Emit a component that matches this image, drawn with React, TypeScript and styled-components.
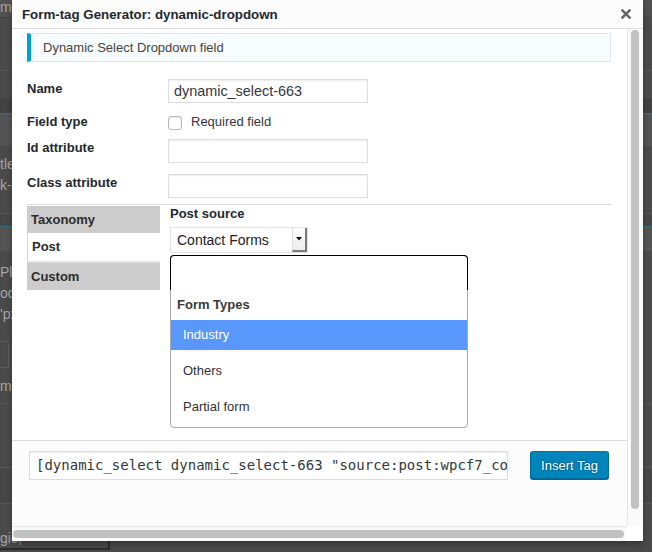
import styled, { createGlobalStyle } from 'styled-components'

const GlobalStyle = createGlobalStyle`
  html, body {
    margin: 0;
    padding: 0;
  }
  body {
    background: #4a4a4a;
    font-family: "Liberation Sans", Arial, sans-serif;
  }
  * {
    box-sizing: border-box;
  }
`;

const Screen = styled.div`
    position: relative;
    width: 652px;
    height: 552px;
    overflow: hidden;
    background: #4a4a4a;
`;

/* page behind the overlay */
const Backdrop = styled.div`
    display: flex;
    flex-direction: column;
    width: 652px;
    font-family: "Liberation Sans", Arial, sans-serif;
    font-size: 14px;
    color: #a6a6a6;
    white-space: nowrap;
`;

const BackBand = styled.div<{ $h: number; $bg?: string; $line?: string; $pt?: number; $lh?: number }>`
    height: ${({ $h }) => $h}px;
    background: ${({ $bg }) => $bg ?? 'transparent'};
    border-bottom: 1px solid ${({ $line }) => $line ?? 'transparent'};
    padding-top: ${({ $pt }) => $pt ?? 0}px;
    line-height: ${({ $lh }) => $lh ?? 21}px;
`;

const BackButton = styled.div`
    width: 9px;
    height: 27px;
    margin-top: 10px;
    border: 1px solid #5e5e5e;
    border-left: none;
    border-radius: 0 3px 3px 0;
`;

const BackInput = styled.div`
    width: 110px;
    height: 24px;
    margin-top: 2px;
    border-right: 2px solid #2c2c2c;
    border-bottom: 2px solid #2c2c2c;
    line-height: 24px;
    padding-left: 0;
`;

/* modal */
const Modal = styled.div`
    position: absolute;
    left: 12px;
    top: 0;
    width: 631px;
    height: 541px;
    background: #fff;
    display: flex;
    flex-direction: column;
    box-shadow: 0 3px 6px rgba(0, 0, 0, 0.3);
`;

const TitleBar = styled.div`
    flex: none;
    height: 29px;
    display: flex;
    align-items: center;
    justify-content: space-between;
    padding: 0 11px 0 10px;
    background: #fcfcfc;
    border-bottom: 1px solid #dddddd;
`;

const Title = styled.h1`
    margin: 0;
    font-size: 13.3px;
    font-weight: bold;
    color: #23282d;
`;

const CloseButton = styled.button`
    width: 12px;
    height: 12px;
    padding: 0;
    border: none;
    background: none;
    display: flex;
    color: #666;
`;

const Body = styled.div`
    flex: 1;
    min-height: 0;
    display: flex;
`;

const Viewport = styled.div`
    flex: 1;
    min-width: 0;
    display: flex;
    flex-direction: column;
`;

const Content = styled.div`
    flex: 1;
    padding: 4px 16px 0 15px;
`;

const Notice = styled.div`
    height: 29px;
    display: flex;
    align-items: center;
    padding: 0 12px;
    background: #f7fcfe;
    border: 1px solid #e3e7ea;
    border-left: 4px solid #00a0d2;
    font-size: 13px;
    color: #444;
`;

const FieldRow = styled.div<{ $mt: number }>`
    display: flex;
    align-items: flex-start;
    margin-top: ${({ $mt }) => $mt}px;
`;

const FieldLabel = styled.label<{ $pt?: number }>`
    flex: none;
    width: 141px;
    padding-top: ${({ $pt }) => $pt ?? 0}px;
    font-size: 13px;
    font-weight: bold;
    line-height: 16px;
    color: #23282d;
`;

const TextInput = styled.input`
    width: 200px;
    height: 24px;
    margin: 0;
    padding: 0 5px;
    border: 1px solid #dddddd;
    box-shadow: inset 0 1px 2px rgba(0, 0, 0, 0.07);
    background: #fff;
    font-family: "Liberation Sans", Arial, sans-serif;
    font-size: 14.4px;
    color: #32373c;
    outline: none;
`;

const CheckLine = styled.div`
    display: flex;
    align-items: flex-start;
    gap: 9px;
    font-size: 13px;
    line-height: 16px;
    color: #32373c;
`;

const CheckBox = styled.span`
    width: 14px;
    height: 14px;
    margin-top: 2px;
    border: 1px solid #b4b9be;
    border-radius: 3px;
    background: #fff;
    box-shadow: inset 0 1px 2px rgba(0, 0, 0, 0.1);
`;

const Divider = styled.hr`
    margin: 6px 0 0;
    border: none;
    border-top: 1px solid #dddddd;
`;

const SourceSection = styled.div`
    display: flex;
    gap: 10px;
`;

const TabList = styled.div`
    flex: none;
    width: 133px;
    padding-top: 1px;
    display: flex;
    flex-direction: column;
`;

const Tab = styled.div<{ $active?: boolean }>`
    height: ${({ $active }) => ($active ? 30 : 27)}px;
    padding-left: 4px;
    line-height: 27px;
    font-size: 13px;
    font-weight: bold;
    color: #2c2c2c;
    background: ${({ $active }) => ($active ? '#fff' : '#cccccc')};
    border-left: ${({ $active }) => ($active ? '1px solid #d4d4d4' : 'none')};
    border-bottom: ${({ $active }) => ($active ? '2px solid #e2e2e2' : 'none')};
`;

const SourcePanel = styled.div`
    padding-top: 1px;
    display: flex;
    flex-direction: column;
`;

const PanelLabel = styled.div`
    font-size: 13px;
    font-weight: bold;
    line-height: 16px;
    color: #23282d;
`;

const SelectBox = styled.div`
    margin-top: 5px;
    width: 138px;
    height: 26px;
    display: flex;
    border: 1px solid #e4e4e4;
    background: #fff;
`;

const SelectValue = styled.div`
    flex: 1;
    padding-left: 6px;
    font-size: 14px;
    line-height: 24px;
    color: #222;
`;

const SelectArrow = styled.div`
    width: 15px;
    display: flex;
    align-items: center;
    justify-content: center;
    background: linear-gradient(#ffffff, #ececec);
    border-left: 1px solid #e0e0e0;
    border-right: 2px solid #7a7a7a;
    border-bottom: 2px solid #7a7a7a;
`;

const Dropdown = styled.div`
    margin-top: 2px;
    width: 298px;
    border: 1px solid #aaaaaa;
    border-radius: 4px;
    background: #fff;
    padding-bottom: 5px;
`;

const SearchField = styled.div`
    height: 35px;
    margin: -1px -1px 0;
    border: 1px solid #000;
    border-bottom: none;
    border-radius: 4px 4px 0 0;
`;

const GroupLabel = styled.div`
    height: 30px;
    padding-left: 6px;
    line-height: 30px;
    font-size: 13px;
    font-weight: bold;
    color: #3a3a3a;
`;

const OptionList = styled.div`
    display: flex;
    flex-direction: column;
    gap: 6px;
`;

const Option = styled.div<{ $highlighted?: boolean }>`
    height: 30px;
    padding-left: 12px;
    line-height: 30px;
    font-size: 13px;
    color: ${({ $highlighted }) => ($highlighted ? '#fff' : '#333')};
    background: ${({ $highlighted }) => ($highlighted ? '#5897fb' : 'transparent')};
`;

const Footer = styled.div`
    flex: none;
    height: 86px;
    display: flex;
    align-items: flex-start;
    gap: 22px;
    padding: 10px 18px 0 17px;
    border-top: 1px solid #dddddd;
    background: #fcfcfc;
`;

const TagField = styled.div`
    flex: none;
    width: 479px;
    height: 29px;
    padding: 0 6px;
    overflow: hidden;
    white-space: nowrap;
    border: 1px solid #dddddd;
    box-shadow: inset 0 1px 2px rgba(0, 0, 0, 0.07);
    background: #fff;
    font-family: "DejaVu Sans Mono", "Liberation Mono", monospace;
    font-size: 14px;
    line-height: 26px;
    color: #32373c;
`;

const InsertButton = styled.button`
    width: 79px;
    height: 28px;
    margin: 0;
    padding: 0;
    border: 1px solid #0073aa;
    border-color: #0073aa #006799 #006799;
    border-radius: 3px;
    box-shadow: 0 1px 0 #006799;
    background: #0085ba;
    color: #fff;
    font-family: "Liberation Sans", Arial, sans-serif;
    font-size: 13px;
    text-shadow: 0 -1px 1px #006799, 1px 0 1px #006799, 0 1px 1px #006799, -1px 0 1px #006799;
`;

const VTrack = styled.div`
    flex: none;
    width: 16px;
    padding: 1px 4px 0 3px;
    border-left: 1px solid #e6e6e6;
    background: #fafafa;
`;

const VThumb = styled.div`
    width: 8px;
    height: 479px;
    border-radius: 4px;
    background: #c1c1c1;
`;

const HScrollRow = styled.div`
    flex: none;
    height: 15px;
    display: flex;
`;

const HTrack = styled.div`
    flex: 1;
    padding: 3px 3px 0 1px;
    border-top: 1px solid #e6e6e6;
    background: #fafafa;
`;

const HThumb = styled.div`
    height: 8px;
    border-radius: 4px;
    background: #c1c1c1;
`;

const ScrollCorner = styled.div`
    width: 16px;
    background: #fff;
`;

const CloseIcon = () => (
    <svg width="12" height="12" viewBox="0 0 12 12">
        <path d="M1.6 1.6 L10.4 10.4 M10.4 1.6 L1.6 10.4" stroke="currentColor" strokeWidth="2.6" />
    </svg>
);

const ArrowIcon = () => (
    <svg width="6" height="4" viewBox="0 0 6 4">
        <path d="M0 0 H6 L3 3.5 Z" fill="#111" />
    </svg>
);

const TABS = [
    { title: 'Taxonomy', active: false },
    { title: 'Post', active: true },
    { title: 'Custom', active: false },
];

const OPTIONS = ['Industry', 'Others', 'Partial form'];

const TAG_CODE = '[dynamic_select dynamic_select-663 "source:post:wpcf7_contact_form" "taxonomy:wpcf7_form_type"]';

export default function App() {
    return (
        <Screen>
            <GlobalStyle />
            <Backdrop>
                <BackBand $h={18} $bg="#515151" $line="#434343" $lh={15}>me</BackBand>
                <BackBand $h={53} $line="#555" />
                <BackBand $h={27} />
                <BackBand $h={16} $bg="#424242" $line="#3d6b86" />
                <BackBand $h={32} $bg="#535353" />
                <BackBand $h={60} $pt={8}>tle<br />k-f</BackBand>
                <BackBand $h={8} $line="#555" />
                <BackBand $h={13} $bg="#474747" $line="#3d6b86" />
                <BackBand $h={24} $bg="#545454" />
                <BackBand $h={80} $pt={11}>Ple<br />od<br />'px:</BackBand>
                <BackButton />
                <BackBand $h={36} $pt={3} $lh={30} $line="#555">me</BackBand>
                <BackBand $h={64} $line="#5a5a5a" />
                <BackBand $h={36} $bg="#474747" $line="#555" />
                <BackBand $h={20} />
                <BackInput>gic,</BackInput>
            </Backdrop>

            <Modal>
                <TitleBar>
                    <Title>Form-tag Generator: dynamic-dropdown</Title>
                    <CloseButton aria-label="Close">
                        <CloseIcon />
                    </CloseButton>
                </TitleBar>
                <Body>
                    <Viewport>
                        <Content>
                            <Notice>Dynamic Select Dropdown field</Notice>

                            <FieldRow $mt={17}>
                                <FieldLabel $pt={2}>Name</FieldLabel>
                                <TextInput readOnly defaultValue="dynamic_select-663" />
                            </FieldRow>
                            <FieldRow $mt={11}>
                                <FieldLabel>Field type</FieldLabel>
                                <CheckLine>
                                    <CheckBox />
                                    Required field
                                </CheckLine>
                            </FieldRow>
                            <FieldRow $mt={9}>
                                <FieldLabel $pt={1}>Id attribute</FieldLabel>
                                <TextInput readOnly defaultValue="" />
                            </FieldRow>
                            <FieldRow $mt={11}>
                                <FieldLabel $pt={1}>Class attribute</FieldLabel>
                                <TextInput readOnly defaultValue="" />
                            </FieldRow>

                            <Divider />

                            <SourceSection>
                                <TabList>
                                    {TABS.map((tab) => (
                                        <Tab key={tab.title} $active={tab.active}>{tab.title}</Tab>
                                    ))}
                                </TabList>
                                <SourcePanel>
                                    <PanelLabel>Post source</PanelLabel>
                                    <SelectBox>
                                        <SelectValue>Contact Forms</SelectValue>
                                        <SelectArrow>
                                            <ArrowIcon />
                                        </SelectArrow>
                                    </SelectBox>
                                    <Dropdown>
                                        <SearchField />
                                        <GroupLabel>Form Types</GroupLabel>
                                        <OptionList>
                                            {OPTIONS.map((option, i) => (
                                                <Option key={option} $highlighted={i === 0}>{option}</Option>
                                            ))}
                                        </OptionList>
                                    </Dropdown>
                                </SourcePanel>
                            </SourceSection>
                        </Content>
                        <Footer>
                            <TagField>{TAG_CODE}</TagField>
                            <InsertButton>Insert Tag</InsertButton>
                        </Footer>
                    </Viewport>
                    <VTrack>
                        <VThumb />
                    </VTrack>
                </Body>
                <HScrollRow>
                    <HTrack>
                        <HThumb />
                    </HTrack>
                    <ScrollCorner />
                </HScrollRow>
            </Modal>
        </Screen>
    )
}
